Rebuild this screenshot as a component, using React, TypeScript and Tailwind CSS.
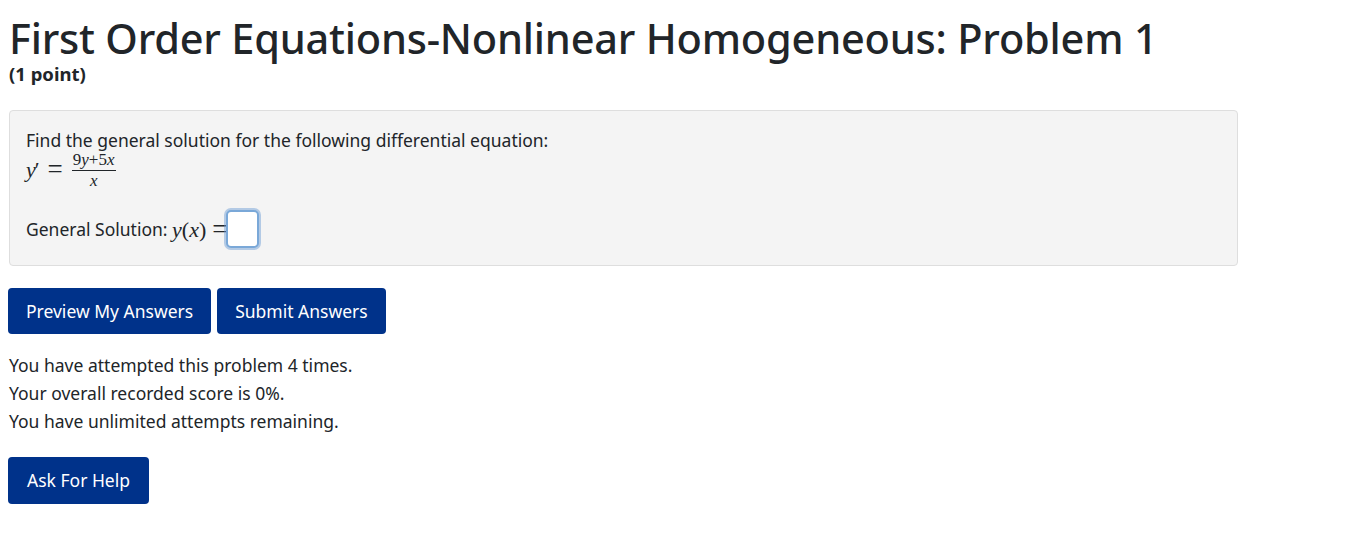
import React from "react";

const sans = { fontFamily: '"Noto Sans", "Open Sans", sans-serif' };
const serif = { fontFamily: '"Liberation Serif", serif' };

function MathVar({ children }: { children: React.ReactNode }) {
  return <span className="italic" style={serif}>{children}</span>;
}

export default function App() {
  return (
    <div className="bg-white text-[#212529] w-[1353px] h-[533px] overflow-hidden" style={sans}>
      <div className="pl-[9px] pt-[16px]">
        <h1 className="text-[41.5px] leading-[44px] font-medium tracking-[-0.2px]">
          First Order Equations-Nonlinear Homogeneous: Problem 1
        </h1>
        <div className="text-[18.5px] font-bold leading-[22px] mt-[3px]">(1 point)</div>

        <div className="mt-[25px] w-[1229px] h-[156px] bg-[#f4f4f4] border border-[#dedede] rounded-[4px] pl-[16px] pt-[15px] text-[17.5px]">
          <div className="leading-[28px]">Find the general solution for the following differential equation:</div>
          <div className="flex items-center h-[30px]" style={serif}>
            <span className="italic text-[22px]">y</span>
            <span className="text-[22px] -ml-[1px]">′</span>
            <span className="text-[27px] ml-[8px] mr-[9px] leading-none">=</span>
            <span className="inline-flex flex-col items-center text-[17px] leading-[14px] mt-[2px]">
              <span className="px-[1px]">9<i>y</i>+5<i>x</i></span>
              <span className="block w-full h-[1px] bg-[#212529] my-[3px]"></span>
              <i>x</i>
            </span>
          </div>
          <div className="flex items-center mt-[25px] h-[40px]">
            <span className="leading-[28px]">General Solution:&nbsp;</span>
            <span className="text-[22px]" style={serif}>
              <MathVar>y</MathVar>(<MathVar>x</MathVar>)
            </span>
            <span className="text-[27px] ml-[6px] leading-none" style={serif}>=</span>
            <span className="inline-block w-[33px] h-[38px] bg-white border-[2px] border-[#7aa8d8] rounded-[5px] shadow-[0_0_0_2px_rgba(100,150,210,0.45)] -ml-[1px]"></span>
          </div>
        </div>

        <div className="flex gap-[6px] mt-[22px] -ml-[1px]">
          <button className="bg-[#00328a] text-white text-[17.5px] h-[46px] px-[18px] rounded-[4px]">Preview My Answers</button>
          <button className="bg-[#00328a] text-white text-[17.5px] h-[46px] px-[18px] rounded-[4px]">Submit Answers</button>
        </div>

        <div className="mt-[17px] text-[17.5px] leading-[28px]">
          <div>You have attempted this problem 4 times.</div>
          <div>Your overall recorded score is 0%.</div>
          <div>You have unlimited attempts remaining.</div>
        </div>

        <button className="mt-[22px] -ml-[1px] bg-[#00328a] text-white text-[17.5px] h-[47px] px-[19px] rounded-[4px]">Ask For Help</button>
      </div>
    </div>
  );
}
